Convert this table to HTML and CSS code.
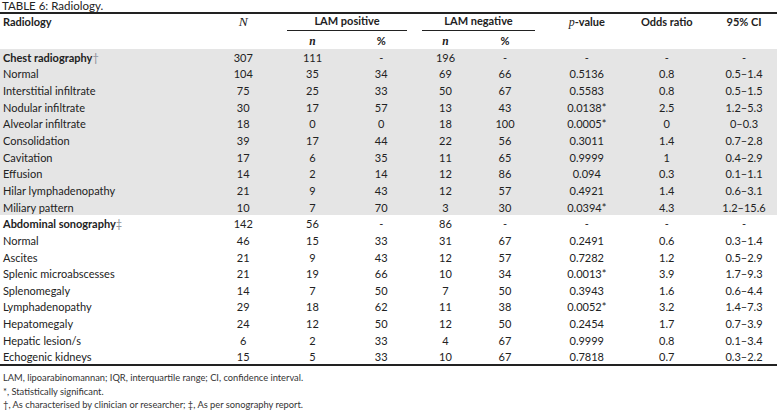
FILE: index.html
```html
<!DOCTYPE html>
<html>
<head>
<meta charset="utf-8">
<link rel="stylesheet" href="styles.css">
</head>
<body>
<div class="title">TABLE 6: Radiology.</div>
<table class="tbl">
  <colgroup>
    <col class="c-label"><col class="c-N"><col class="c-np"><col class="c-pp"><col class="c-nn"><col class="c-pn"><col class="c-pv"><col class="c-or"><col class="c-ci">
  </colgroup>
  <thead>
    <tr class="h1">
      <th class="lbl">Radiology</th>
      <th><span class="it-serif big">N</span></th>
      <th colspan="2" class="grp"><div class="uline pos">LAM positive</div></th>
      <th colspan="2" class="grp"><div class="uline neg">LAM negative</div></th>
      <th><span class="it-serif-p">p</span>-value</th>
      <th>Odds ratio</th>
      <th class="ci">95% CI</th>
    </tr>
    <tr class="h2">
      <th></th><th></th>
      <th><span class="it-serif">n</span></th><th>%</th>
      <th><span class="it-serif">n</span></th><th class="pn">%</th>
      <th></th><th></th><th></th>
    </tr>
  </thead>
  <tbody>
    <tr class="shade"><td class="lbl b">Chest radiography<span class="dag">†</span></td><td>307</td><td>111</td><td>-</td><td>196</td><td class="pn">-</td><td>-</td><td>-</td><td class="ci">-</td></tr>
    <tr class="shade"><td class="lbl">Normal</td><td>104</td><td>35</td><td>34</td><td>69</td><td class="pn">66</td><td>0.5136</td><td>0.8</td><td class="ci">0.5–1.4</td></tr>
    <tr class="shade"><td class="lbl">Interstitial infiltrate</td><td>75</td><td>25</td><td>33</td><td>50</td><td class="pn">67</td><td>0.5583</td><td>0.8</td><td class="ci">0.5–1.5</td></tr>
    <tr class="shade"><td class="lbl">Nodular infiltrate</td><td>30</td><td>17</td><td>57</td><td>13</td><td class="pn">43</td><td>0.0138*</td><td>2.5</td><td class="ci">1.2–5.3</td></tr>
    <tr class="shade"><td class="lbl">Alveolar infiltrate</td><td>18</td><td>0</td><td>0</td><td>18</td><td class="pn">100</td><td>0.0005*</td><td>0</td><td class="ci">0–0.3</td></tr>
    <tr class="shade"><td class="lbl">Consolidation</td><td>39</td><td>17</td><td>44</td><td>22</td><td class="pn">56</td><td>0.3011</td><td>1.4</td><td class="ci">0.7–2.8</td></tr>
    <tr class="shade"><td class="lbl">Cavitation</td><td>17</td><td>6</td><td>35</td><td>11</td><td class="pn">65</td><td>0.9999</td><td>1</td><td class="ci">0.4–2.9</td></tr>
    <tr class="shade"><td class="lbl">Effusion</td><td>14</td><td>2</td><td>14</td><td>12</td><td class="pn">86</td><td>0.094</td><td>0.3</td><td class="ci">0.1–1.1</td></tr>
    <tr class="shade"><td class="lbl">Hilar lymphadenopathy</td><td>21</td><td>9</td><td>43</td><td>12</td><td class="pn">57</td><td>0.4921</td><td>1.4</td><td class="ci">0.6–3.1</td></tr>
    <tr class="shade"><td class="lbl">Miliary pattern</td><td>10</td><td>7</td><td>70</td><td>3</td><td class="pn">30</td><td>0.0394*</td><td>4.3</td><td class="ci">1.2–15.6</td></tr>
    <tr><td class="lbl b">Abdominal sonography<span class="dag">‡</span></td><td>142</td><td>56</td><td>-</td><td>86</td><td class="pn">-</td><td>-</td><td>-</td><td class="ci">-</td></tr>
    <tr><td class="lbl">Normal</td><td>46</td><td>15</td><td>33</td><td>31</td><td class="pn">67</td><td>0.2491</td><td>0.6</td><td class="ci">0.3–1.4</td></tr>
    <tr><td class="lbl">Ascites</td><td>21</td><td>9</td><td>43</td><td>12</td><td class="pn">57</td><td>0.7282</td><td>1.2</td><td class="ci">0.5–2.9</td></tr>
    <tr><td class="lbl">Splenic microabscesses</td><td>21</td><td>19</td><td>66</td><td>10</td><td class="pn">34</td><td>0.0013*</td><td>3.9</td><td class="ci">1.7–9.3</td></tr>
    <tr><td class="lbl">Splenomegaly</td><td>14</td><td>7</td><td>50</td><td>7</td><td class="pn">50</td><td>0.3943</td><td>1.6</td><td class="ci">0.6–4.4</td></tr>
    <tr><td class="lbl">Lymphadenopathy</td><td>29</td><td>18</td><td>62</td><td>11</td><td class="pn">38</td><td>0.0052*</td><td>3.2</td><td class="ci">1.4–7.3</td></tr>
    <tr><td class="lbl">Hepatomegaly</td><td>24</td><td>12</td><td>50</td><td>12</td><td class="pn">50</td><td>0.2454</td><td>1.7</td><td class="ci">0.7–3.9</td></tr>
    <tr><td class="lbl">Hepatic lesion/s</td><td>6</td><td>2</td><td>33</td><td>4</td><td class="pn">67</td><td>0.9999</td><td>0.8</td><td class="ci">0.1–3.4</td></tr>
    <tr><td class="lbl">Echogenic kidneys</td><td>15</td><td>5</td><td>33</td><td>10</td><td class="pn">67</td><td>0.7818</td><td>0.7</td><td class="ci">0.3–2.2</td></tr>
  </tbody>
</table>
<div class="notes">
  <p>LAM, lipoarabinomannan; IQR, interquartile range; CI, confidence interval.</p>
  <p>*, Statistically significant.</p>
  <p>†, As characterised by clinician or researcher; ‡, As per sonography report.</p>
</div>
</body>
</html>
```

FILE: styles.css
```css
html, body {
  margin: 0;
  padding: 0;
  background: #fff;
}
body {
  font-family: Lato, "Open Sans", sans-serif;
  font-size: 11px;
  color: #222;
  width: 777px;
}
.title {
  height: 12px;
  line-height: 12px;
  padding-left: 2px;
  font-size: 11.5px;
}
.tbl {
  width: 777px;
  border-collapse: collapse;
  table-layout: fixed;
  border-top: 2px solid #222;
  border-bottom: 2px solid #222;
}
.c-label { width: 209px; }
.c-N { width: 68.5px; }
.c-np { width: 70px; }
.c-pp { width: 67.5px; }
.c-nn { width: 61px; }
.c-pn { width: 70px; }
.c-pv { width: 81.5px; }
.c-or { width: 78.5px; }
.c-ci { width: 71px; }
th, td {
  padding: 0;
  text-align: center;
  white-space: nowrap;
  overflow: visible;
}
th { font-weight: 700; }
.h1 { height: 17px; }
.h1 th { vertical-align: bottom; line-height: 14px; padding-bottom: 2px; }
.h1 th.grp { padding-bottom: 0; }
.h2 { height: 18px; }
.h2 th { vertical-align: middle; line-height: 14px; padding-top: 2px; }
.lbl { text-align: left; padding-left: 3px; }
.pn { padding-right: 12px; }
.ci { padding-left: 5px; }
.uline {
  border-bottom: 1px solid #222;
  padding-bottom: 2px;
}
.uline.pos { margin: 0 8px 0 9.5px; }
.uline.neg { margin: 0 11px 0 7px; }
.it-serif {
  font-family: "Liberation Serif", serif;
  font-style: italic;
  font-weight: 700;
  font-size: 11.5px;
}
.it-serif.big { font-size: 13.5px; font-weight: 400; }
.it-serif-p {
  font-family: "Liberation Serif", serif;
  font-style: italic;
  font-weight: 400;
  font-size: 12px;
}
tbody tr { height: 16.65px; }
tbody td { line-height: 13px; vertical-align: middle; }
tr.shade td { background: #e5e5e5; }
.b { font-weight: 700; }
.dag { font-weight: 400; color: #8a8f99; }
.notes {
  padding-top: 5px;
  padding-left: 3px;
  font-size: 9.3px;
  color: #333;
}
.notes p {
  margin: 0;
  line-height: 13.5px;
}
```
